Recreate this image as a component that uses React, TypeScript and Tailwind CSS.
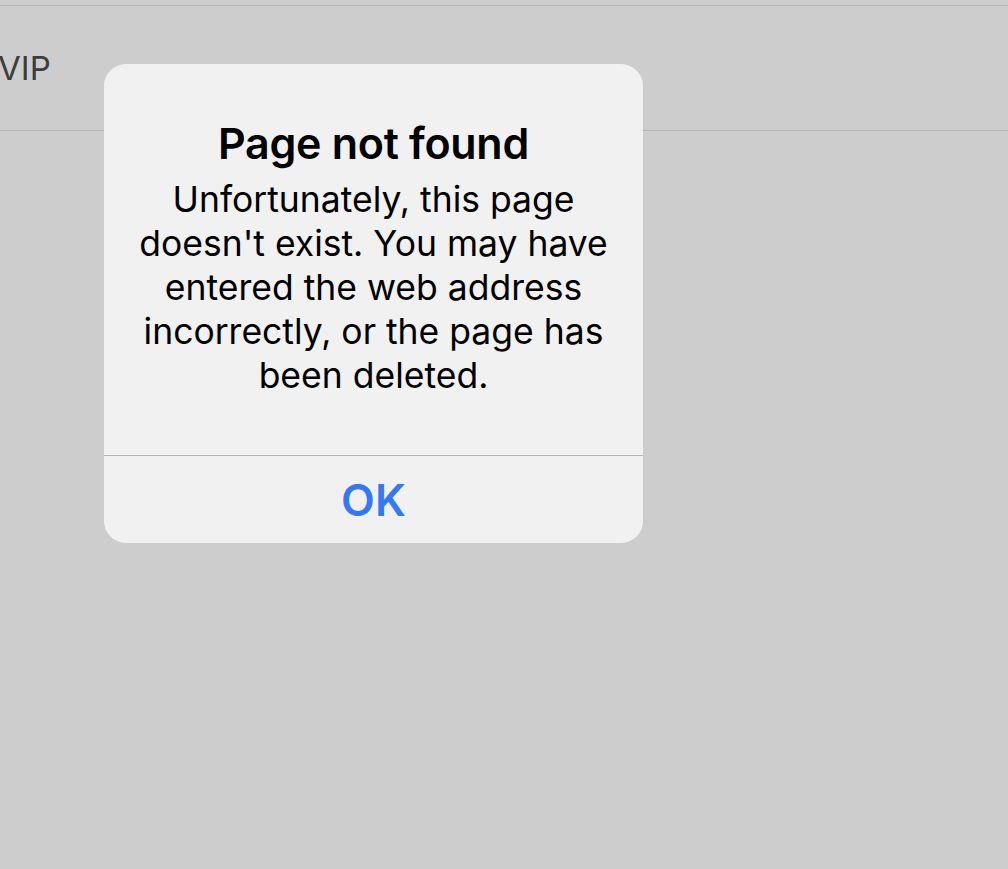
export default function App() {
  return (
    <div
      className="relative w-[1008px] h-[869px] overflow-hidden bg-[#cdcdcd]"
      style={{ fontFamily: "Inter, 'Noto Sans', sans-serif" }}
    >
      {/* background page */}
      <div className="mt-[5px] border-t border-[#b2b2b2]">
        <div className="flex h-[125px] items-center border-b border-[#b2b2b2]">
          <span className="-ml-[2px] mt-[2px] text-[33px] text-[#3d3d3d]">VIP</span>
        </div>
      </div>

      {/* alert */}
      <div className="absolute left-[104px] top-[64px] w-[539px] overflow-hidden rounded-[22px] bg-[#f1f1f1]">
        <div className="flex h-[391px] flex-col items-center px-6 pt-[53px] text-center text-black">
          <h1 className="text-[43px] font-semibold leading-[52px] tracking-[-0.3px]">Page not found</h1>
          <p className="mt-[9px] text-[35.5px] leading-[44px]">
            Unfortunately, this page doesn't exist. You may have entered the web address incorrectly, or the page has
            been deleted.
          </p>
        </div>
        <div className="h-px bg-[#b5b5b5]" />
        <button className="flex h-[87px] w-full items-center justify-center text-[44px] font-semibold text-[#3478f6]">
          OK
        </button>
      </div>
    </div>
  )
}
